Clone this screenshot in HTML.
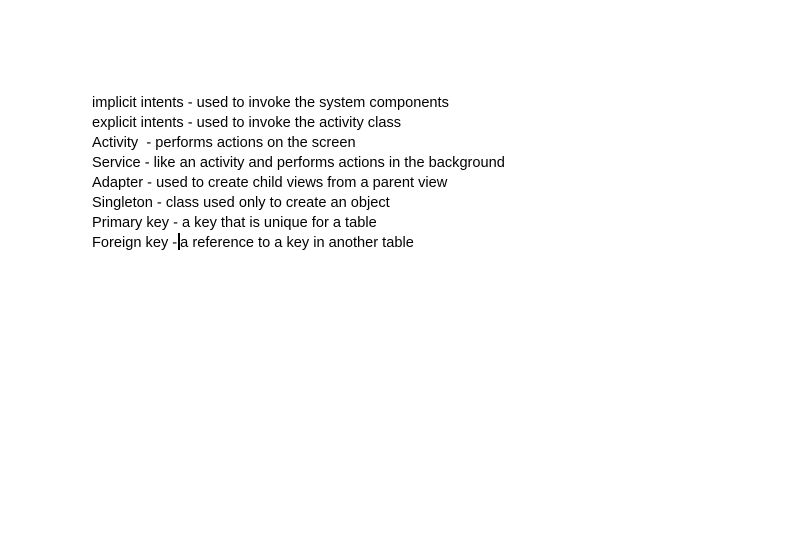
<!DOCTYPE html>
<html><head><style>
body{margin:0;width:812px;height:560px;background:#fff;overflow:hidden}
.t{position:absolute;left:92px;top:92.5px;font-family:"Liberation Sans",sans-serif;font-size:14.6px;line-height:20px;color:#000;white-space:pre}
.c{display:inline-block;width:2px;height:17px;background:#000;vertical-align:-3px;margin-left:1px}
</style></head><body>
<div class="t">implicit intents - used to invoke the system components
explicit intents - used to invoke the activity class
Activity  - performs actions on the screen
Service - like an activity and performs actions in the background
Adapter - used to create child views from a parent view
Singleton - class used only to create an object
Primary key - a key that is unique for a table
Foreign key -<span class="c"></span>a reference to a key in another table</div>
</body></html>
